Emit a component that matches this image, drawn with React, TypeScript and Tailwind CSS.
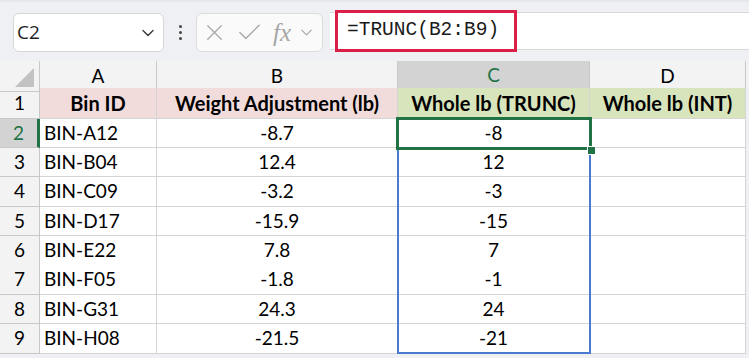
import { ChevronDown, X, Check } from "lucide-react";

const rows = [
  ["BIN-A12", "-8.7", "-8"],
  ["BIN-B04", "12.4", "12"],
  ["BIN-C09", "-3.2", "-3"],
  ["BIN-D17", "-15.9", "-15"],
  ["BIN-E22", "7.8", "7"],
  ["BIN-F05", "-1.8", "-1"],
  ["BIN-G31", "24.3", "24"],
  ["BIN-H08", "-21.5", "-21"],
];

const cols = "grid grid-cols-[40px_117px_241px_192px_156px_1fr]";
const cell = "border-r border-b border-[#d4d4d4] bg-white flex items-center";

export default function App() {
  return (
    <div className="w-[749px] h-[358px] overflow-hidden bg-[#eef0f3] font-['Lato',sans-serif] text-black">
      {/* formula bar */}
      <div className="h-[61px] flex items-start pt-[13px] bg-gradient-to-b from-[#e2e4e7] via-[#eef0f3] to-[#eef0f3] bg-[length:100%_6px] bg-no-repeat">
        <div className="ml-[13px] w-[151px] h-[39px] bg-white rounded-[6px] border border-[#d6d6d6] flex items-center justify-between pl-[3px] pr-[5px]">
          <span className="font-['Open_Sans',sans-serif] text-[19px] text-[#1f1f1f]">C2</span>
          <ChevronDown className="w-[20px] h-[20px] text-[#333]" strokeWidth={1.6} />
        </div>
        <div className="w-[32px] h-[39px] flex flex-col items-center justify-center gap-[3px]">
          <span className="w-[3px] h-[3px] bg-[#444] rounded-full" />
          <span className="w-[3px] h-[3px] bg-[#444] rounded-full" />
          <span className="w-[3px] h-[3px] bg-[#444] rounded-full" />
        </div>
        <div className="w-[127px] h-[39px] bg-[#fafafa] rounded-[6px] border border-[#dcdcdc] flex items-center pl-[4px] text-[#a6a6a6]">
          <X className="w-[27px] h-[27px]" strokeWidth={1.1} />
          <Check className="w-[29px] h-[29px] ml-[7px]" strokeWidth={1.1} />
          <span className="ml-[9px] font-['Liberation_Serif',serif] italic text-[25px] leading-none">fx</span>
          <ChevronDown className="w-[19px] h-[19px] ml-[6px]" strokeWidth={1.4} />
        </div>
        <div className="ml-[7px] flex-1 h-[38px] mt-[-1px] bg-white border-y border-[#d8d8d8] relative">
          <div className="absolute left-[5px] top-[-3px] w-[182px] h-[42px] border-[3px] border-[#dc1f48] flex items-center pl-[9px]">
            <span className="font-['Liberation_Mono',monospace] text-[19.5px] text-[#1a1a1a]">=TRUNC(B2:B9)</span>
          </div>
        </div>
      </div>

      {/* grid */}
      <div className="relative">
        <div className={`${cols} h-[27px] text-[19px]`}>
          <div className="bg-[#f3f3f3] border-r border-b border-[#c8c8c8] relative">
            <div className="absolute right-[5px] bottom-[4px] w-0 h-0 border-l-[19px] border-l-transparent border-b-[19px] border-b-[#c2c2c2]" />
          </div>
          <div className="bg-[#f3f3f3] border-r border-b border-[#c8c8c8] flex items-center justify-center">A</div>
          <div className="bg-[#f3f3f3] border-r border-b border-[#c8c8c8] flex items-center justify-center">B</div>
          <div className="bg-[#d3d3d3] border-r border-b-2 border-r-[#c8c8c8] border-b-[#217346] flex items-center justify-center text-[#217346]">C</div>
          <div className="bg-[#f3f3f3] border-r border-b border-[#c8c8c8] flex items-center justify-center">D</div>
          <div className="bg-[#f3f3f3] border-b border-[#c8c8c8]" />
        </div>

        <div className={`${cols} h-[30.5px] text-[19px]`}>
          <div className="bg-[#f3f3f3] border-r border-b border-[#c8c8c8] flex items-center justify-center">1</div>
          <div className={`${cell} !bg-[#f2dcdb] justify-center font-bold text-[20px]`}>Bin ID</div>
          <div className={`${cell} !bg-[#f2dcdb] justify-center font-bold text-[20px]`}>Weight Adjustment (lb)</div>
          <div className={`${cell} !bg-[#d8e4bc] justify-center font-bold text-[20px]`}>Whole lb (TRUNC)</div>
          <div className={`${cell} !bg-[#d8e4bc] justify-center font-bold text-[20px]`}>Whole lb (INT)</div>
          <div className="bg-[#eef0f3]" />
        </div>

        {rows.map((r, i) => (
          <div key={r[0]} className={`${cols} h-[29.4px] text-[19px]`}>
            <div
              className={
                i === 0
                  ? "bg-[#d3d3d3] border-r-[3px] border-b border-r-[#217346] border-b-[#c8c8c8] flex items-center justify-center text-[#217346]"
                  : "bg-[#f3f3f3] border-r border-b border-[#c8c8c8] flex items-center justify-center"
              }
            >
              {i + 2}
            </div>
            <div className={`${cell} pl-[4px]`}>{r[0]}</div>
            <div className={`${cell} justify-center`}>{r[1]}</div>
            <div className={`${cell} justify-center`}>{r[2]}</div>
            <div className={cell} />
            <div className="bg-[#eef0f3]" />
          </div>
        ))}

        {/* spill range + active cell */}
        <div className="absolute left-[397px] top-[57px] w-[194px] h-[236px] border-2 border-[#4a7bd0] pointer-events-none" />
        <div className="absolute left-[396px] top-[56px] w-[196px] h-[33px] border-[3px] border-[#217346] pointer-events-none" />
        <div className="absolute left-[587px] top-[85px] w-[7px] h-[7px] bg-[#217346] border border-white box-content pointer-events-none" />
      </div>
    </div>
  );
}
